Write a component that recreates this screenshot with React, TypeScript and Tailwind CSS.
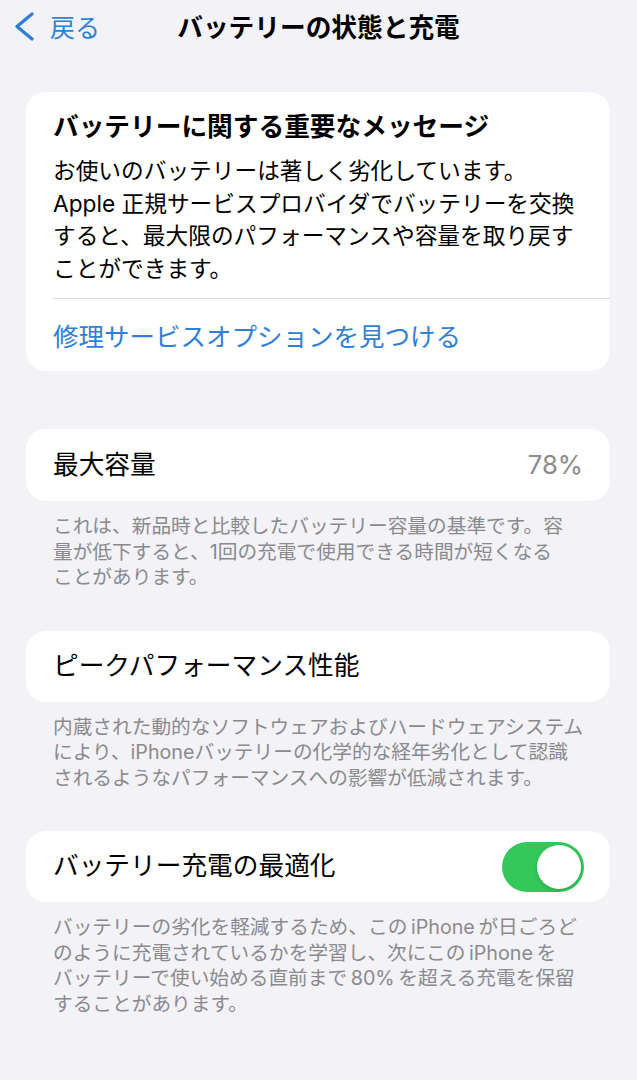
import React from "react";

const font = { fontFamily: '"Inter", "Noto Sans CJK JP", sans-serif' };

function Footer({ lines }: { lines: string[] }) {
  return (
    <div className="mt-[13px] pl-[53px] pr-[20px] text-[19.7px] leading-[25.5px] text-[#8a8a8e] whitespace-nowrap">
      {lines.map((l, i) => (
        <div key={i}>{l}</div>
      ))}
    </div>
  );
}

export default function App() {
  return (
    <div style={font} className="w-[637px] h-[1080px] bg-[#f2f2f7] text-black overflow-hidden">
      {/* Nav */}
      <div className="relative h-[56px] flex items-center">
        <div className="flex items-center pl-[14px] text-[#2f7fd6]">
          <svg width="22" height="30" viewBox="0 0 22 30" className="mr-[14px] -mt-[3px]">
            <path d="M18 2 L3 14.5 L18 27" fill="none" stroke="#2f7fd6" strokeWidth="3.3" strokeLinecap="round" strokeLinejoin="round" />
          </svg>
          <span className="text-[25px] leading-none">戻る</span>
        </div>
        <div className="absolute left-0 right-0 top-0 h-[56px] flex items-center justify-center pointer-events-none">
          <span className="text-[25.7px] font-semibold leading-none pl-[0px]">バッテリーの状態と充電</span>
        </div>
      </div>

      {/* Card 1 */}
      <div className="mt-[36px] ml-[26px] mr-[27px] bg-white rounded-[20px] overflow-hidden">
        <div className="pl-[27px] pt-[20px]">
          <div className="text-[25.7px] font-semibold leading-[30px] whitespace-nowrap">バッテリーに関する重要なメッセージ</div>
          <div className="mt-[13px] text-[22.7px] leading-[32.5px] whitespace-nowrap">
            <div>お使いのバッテリーは著しく劣化しています。</div>
            <div>Apple 正規サービスプロバイダでバッテリーを交換</div>
            <div>すると、最大限のパフォーマンスや容量を取り戻す</div>
            <div>ことができます。</div>
          </div>
          <div className="mt-[13px] h-px bg-[#dcdce0]" />
          <div className="h-[72px] flex items-center pt-[4px] text-[25.5px] text-[#2f7fd6] whitespace-nowrap">
            修理サービスオプションを見つける
          </div>
        </div>
      </div>

      {/* Card 2 */}
      <div className="mt-[58px] ml-[26px] mr-[27px] h-[72px] bg-white rounded-[20px] flex items-center justify-between pl-[27px] pr-[27px]">
        <span className="text-[25.7px]">最大容量</span>
        <span className="text-[25.7px] text-[#8a8a8e]">78%</span>
      </div>
      <Footer
        lines={[
          "これは、新品時と比較したバッテリー容量の基準です。容",
          "量が低下すると、1回の充電で使用できる時間が短くなる",
          "ことがあります。",
        ]}
      />

      {/* Card 3 */}
      <div className="mt-[40px] ml-[26px] mr-[27px] h-[71px] bg-white rounded-[20px] flex items-center pl-[27px]">
        <span className="text-[25.7px]">ピークパフォーマンス性能</span>
      </div>
      <Footer
        lines={[
          "内蔵された動的なソフトウェアおよびハードウェアシステム",
          "により、iPhoneバッテリーの化学的な経年劣化として認識",
          "されるようなパフォーマンスへの影響が低減されます。",
        ]}
      />

      {/* Card 4 */}
      <div className="mt-[40px] ml-[26px] mr-[27px] h-[71px] bg-white rounded-[20px] flex items-center justify-between pl-[27px] pr-[26px]">
        <span className="text-[25.7px]">バッテリー充電の最適化</span>
        <div className="w-[82px] h-[50px] rounded-full bg-[#34c759] flex items-center justify-end pr-[3px]">
          <div className="w-[44px] h-[44px] rounded-full bg-white shadow-[0_2px_4px_rgba(0,0,0,0.15)]" />
        </div>
      </div>
      <Footer
        lines={[
          "バッテリーの劣化を軽減するため、この\u2009iPhone\u2009が日ごろど",
          "のように充電されているかを学習し、次にこの\u2009iPhone\u2009を",
          "バッテリーで使い始める直前まで\u200980%\u2009を超える充電を保留",
          "することがあります。",
        ]}
      />
    </div>
  );
}
